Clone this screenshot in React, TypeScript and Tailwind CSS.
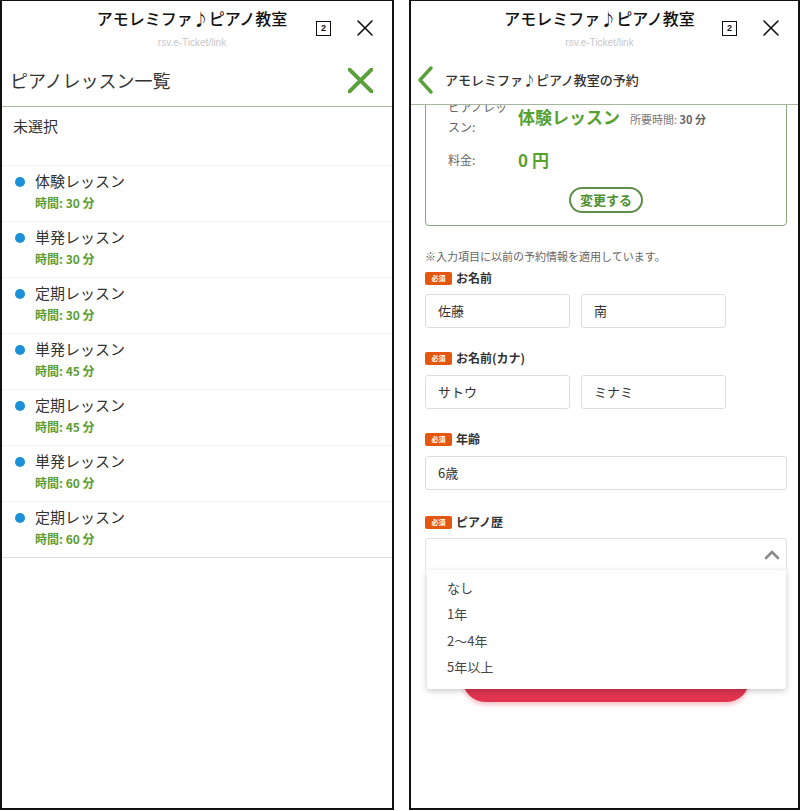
import React from 'react'

const lessons = [
  { name: '体験レッスン', time: 30 },
  { name: '単発レッスン', time: 30 },
  { name: '定期レッスン', time: 30 },
  { name: '単発レッスン', time: 45 },
  { name: '定期レッスン', time: 45 },
  { name: '単発レッスン', time: 60 },
  { name: '定期レッスン', time: 60 },
]

const historyOptions = ['なし', '1年', '2〜4年', '5年以上']

function CloseIcon({ size = 16, color = '#111', width = 1.6 }: { size?: number; color?: string; width?: number }) {
  return (
    <svg width={size} height={size} viewBox="0 0 16 16" fill="none">
      <path d="M1 1 L15 15 M15 1 L1 15" stroke={color} strokeWidth={width} strokeLinecap="round" />
    </svg>
  )
}

// header shared by both phone frames
function BrowserHeader() {
  return (
    <div className="h-[56px] grid grid-cols-[1fr_auto_1fr] pr-[10px]">
      <div />
      <div className="flex flex-col items-center pt-[6px]">
        <div className="text-[16px] leading-[22px] font-medium text-[#111] whitespace-nowrap">アモレミファ♪ピアノ教室</div>
        <div className="mt-[7px] text-[10px] leading-[14px] text-[#c8c8c8] font-['Liberation_Sans',sans-serif]">rsv.e-Ticket/link</div>
      </div>
      <div className="flex items-start justify-end pt-[19px] gap-[26px] pr-[9px]">
        <span className="mt-[1px] w-[15px] h-[15px] border-[1.5px] border-[#111] flex items-center justify-center text-[9px] font-bold leading-none text-[#111] font-['Liberation_Sans',sans-serif]">2</span>
        <CloseIcon />
      </div>
    </div>
  )
}

function Required({ label }: { label: string }) {
  return (
    <div className="flex items-center h-[16px] gap-[4px]">
      <span className="w-[27px] h-[13px] rounded-[2px] bg-[#e5570f] text-white text-[7px] font-bold flex items-center justify-center leading-none">必須</span>
      <span className="text-[12px] font-bold text-[#333]">{label}</span>
    </div>
  )
}

function TextBox({ value, className = '' }: { value: string; className?: string }) {
  return (
    <div className={`h-[34px] border border-[#dedede] rounded-[3px] flex items-center pl-[12px] text-[13px] text-[#333] ${className}`}>
      {value}
    </div>
  )
}

export default function App() {
  return (
    <div className="w-[800px] h-[811px] bg-white flex font-['Noto_Sans_CJK_JP','Noto_Sans',sans-serif]">
      {/* Left frame: lesson list */}
      <div className="w-[394px] h-[810px] border-x-2 border-b-2 border-t border-[#111] flex flex-col">
        <BrowserHeader />
        <div className="h-[50px] flex items-center justify-between pl-[8px] pr-[19px] pb-[3px] border-b border-[#a9b8a0]">
          <span className="text-[18px] text-[#333]">ピアノレッスン一覧</span>
          <CloseIcon size={25} color="#5aa13b" width={2.6} />
        </div>
        <div className="h-[59px] pt-[6px] pl-[11px] border-b border-[#f1f1f1]">
          <span className="text-[15px] leading-[20px] text-[#333]">未選択</span>
        </div>
        {lessons.map((l, i) => (
          <div
            key={i}
            className={`h-[56px] pt-[5px] pl-[13px] border-b ${i === lessons.length - 1 ? 'border-[#dcdcdc]' : 'border-[#f1f1f1]'}`}
          >
            <div className="flex items-center h-[20px] gap-[10px]">
              <span className="mt-[2px] w-[10px] h-[10px] rounded-full bg-[#1c90d8]" />
              <span className="text-[15px] text-[#333]">{l.name}</span>
            </div>
            <div className="mt-[4px] pl-[20px] text-[12px] leading-[16px] font-bold text-[#5c9c32]">時間: {l.time} 分</div>
          </div>
        ))}
      </div>

      <div className="w-[15px]" />

      {/* Right frame: reservation form */}
      <div className="w-[391px] h-[810px] border-x-2 border-b-2 border-t border-[#111] flex flex-col">
        <BrowserHeader />
        <div className="h-[48px] flex items-center gap-[9px] pl-[5px] pb-[1px] border-b border-[#a7b69f]">
          <svg width="20" height="28" viewBox="0 0 20 28" fill="none">
            <path d="M15 2 L4 14 L15 26" stroke="#5aa13b" strokeWidth="3.4" strokeLinecap="round" strokeLinejoin="round" />
          </svg>
          <span className="text-[13px] font-medium text-[#333]">アモレミファ♪ピアノ教室の予約</span>
        </div>

        <div className="flex-1 overflow-hidden pl-[14px] pr-[11px]">
          <div className="-mt-[21px] border border-[#8ea582] rounded-[4px] pt-[12px] pb-[12px] pl-[22px]">
            <div className="flex items-center">
              <div className="w-[70px] text-[12px] leading-[20px] text-[#666]">ピアノレッスン:</div>
              <div className="flex items-baseline gap-[10px]">
                <span className="text-[17px] font-bold text-[#56a12f]">体験レッスン</span>
                <span className="text-[11px] text-[#777]">所要時間: <b className="text-[#666]">30 分</b></span>
              </div>
            </div>
            <div className="mt-[13px] flex items-center h-[20px]">
              <div className="w-[70px] text-[12px] text-[#666]">料金:</div>
              <span className="text-[17px] font-bold text-[#56a12f]">0 円</span>
            </div>
            <div className="mt-[17px] flex justify-center pr-[22px]">
              <span className="h-[26px] px-[9px] rounded-full border-2 border-[#5f8d4a] text-[13px] font-bold text-[#4f8f2f] flex items-center">変更する</span>
            </div>
          </div>

          <div className="mt-[23px] text-[11px] leading-[15px] text-[#666]">※入力項目に以前の予約情報を適用しています。</div>

          <div className="mt-[6px]">
            <Required label="お名前" />
            <div className="mt-[8px] flex gap-[11px]">
              <TextBox value="佐藤" className="w-[145px]" />
              <TextBox value="南" className="w-[145px]" />
            </div>
          </div>

          <div className="mt-[22px]">
            <Required label="お名前(カナ)" />
            <div className="mt-[9px] flex gap-[11px]">
              <TextBox value="サトウ" className="w-[145px]" />
              <TextBox value="ミナミ" className="w-[145px]" />
            </div>
          </div>

          <div className="mt-[22px]">
            <Required label="年齢" />
            <TextBox value="6歳" className="mt-[9px]" />
          </div>

          <div className="mt-[24px] relative">
            <Required label="ピアノ歴" />
            <div className="mt-[8px] h-[32px] border border-b-0 border-[#e2e2e2] rounded-t-[3px] flex items-center justify-end pr-[6px]">
              <svg width="16" height="10" viewBox="0 0 16 10" fill="none">
                <path d="M2 8 L8 2 L14 8" stroke="#8a8a8a" strokeWidth="2.6" strokeLinecap="round" strokeLinejoin="round" />
              </svg>
            </div>
            {/* open dropdown list */}
            <div className="absolute left-[2px] right-[1px] top-[56px] z-10 bg-white rounded-b-[3px] shadow-[0_2px_6px_rgba(0,0,0,0.22)] pt-[4px] pb-[9px]">
              {historyOptions.map(o => (
                <div key={o} className="h-[26.5px] flex items-center pl-[20px] text-[13px] text-[#444]">{o}</div>
              ))}
            </div>
            <div className="mt-[88px] mx-[38px] h-[44px] rounded-full bg-[#e1344f] shadow-[0_3px_4px_rgba(225,52,79,0.3)] flex items-center justify-center text-white text-[15px] font-bold">
              予約内容を確認する
            </div>
          </div>
        </div>
      </div>
    </div>
  )
}
